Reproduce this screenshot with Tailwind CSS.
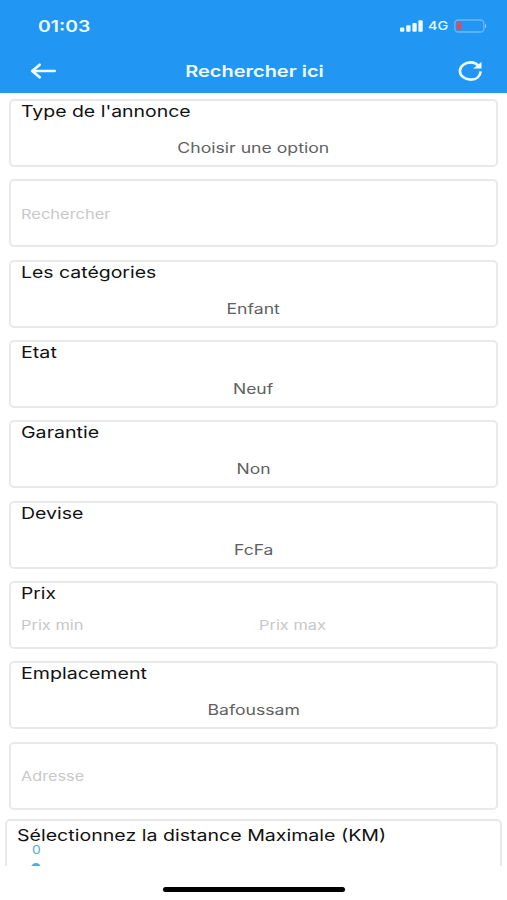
<!DOCTYPE html>
<html lang="fr">
<head>
<meta charset="utf-8">
<title>Rechercher ici</title>
<script src="https://cdn.jsdelivr.net/npm/@tailwindcss/browser@4"></script>
</head>
<body class="bg-white">
<div class="flex h-[900px] w-[507px] flex-col overflow-hidden bg-white font-['Inter','Liberation_Sans',sans-serif] whitespace-nowrap">
  <header class="flex h-[93px] shrink-0 flex-col bg-[#2196f3] text-[#effbff]">
    <div class="flex h-[51px] items-center justify-between pr-[20px] pl-[38px]">
      <span class="origin-left scale-x-[1.21] text-[16px] leading-5 font-semibold">01:03</span>
      <div class="flex items-center">
        <svg class="mr-[5px] h-3 w-[23px]" viewBox="0 0 23 12" fill="currentColor"><rect x="0" y="7.5" width="4.3" height="4.2" rx="1"/><rect x="6.2" y="5.3" width="4.3" height="6.4" rx="1"/><rect x="12.4" y="3" width="4.3" height="8.7" rx="1"/><rect x="18.4" y="0.2" width="4.3" height="11.5" rx="1"/></svg>
        <span class="w-[26px] text-[12px] leading-4 font-medium"><span class="inline-block origin-left scale-x-[1.2]">4G</span></span>
        <svg class="h-[14px] w-[33px]" viewBox="0 0 33 14"><rect x="0.8" y="1" width="29" height="12" rx="3.5" fill="none" stroke="#6db8f7" stroke-width="1.3"/><rect x="2.7" y="2.8" width="4.8" height="8.4" rx="1.5" fill="#c65569"/><path d="M31 4.500q2.500 2.500 0 5z" fill="#8ecbfb"/></svg>
      </div>
    </div>
    <div class="flex h-[40px] items-center justify-between pr-[24px] pl-[30px]">
      <svg class="h-4 w-[27px]" viewBox="0 0 27 16" fill="none" stroke="currentColor" stroke-width="2.7" stroke-linecap="round" stroke-linejoin="round"><path d="M24.700 8H2.500M9.700 1.800L2.200 8l7.500 6.200"/></svg>
      <h1 class="-ml-[7px] scale-x-[1.25] text-[16px] leading-5 font-semibold">Rechercher ici</h1>
      <svg class="h-[20px] w-[25px]" viewBox="0 0 25 20" fill="none" stroke="currentColor" stroke-width="2.6"><path d="M20.500 4.800C18.500 2.500 15.800 1.400 12.700 1.400C6.700 1.400 1.900 5.200 1.900 10S6.700 18.600 12.700 18.600S22.300 15.300 22.600 10.300"/><path d="M23.500 0.800v6.800h-8.300l3.100-2.700 1.500-.8z" fill="currentColor" stroke="none"/></svg>
    </div>
  </header>
  <main class="flex h-[773px] shrink-0 flex-col overflow-hidden pt-[6px]">
    <div class="flex flex-col gap-[12.35px] px-[9px]">
      <section class="flex h-[68px] flex-col rounded-[5px] border-2 border-[#e9e9e9] px-[10px]">
        <h2 class="h-[22px] text-[16px] leading-[21px] text-[#111]"><span class="inline-block origin-left scale-x-[1.215]">Type de l'annonce</span></h2>
        <p class="pt-[15px] text-center text-[14px] leading-[20px] text-[#606060]"><span class="inline-block scale-x-[1.26]">Choisir une option</span></p>
      </section>
      <section class="flex h-[68px] items-center rounded-[5px] border-2 border-[#e9e9e9] px-[10px] pt-[2px]">
        <span class="origin-left scale-x-[1.265] text-[13px] text-[#c8c8c8]">Rechercher</span>
      </section>
      <section class="flex h-[68px] flex-col rounded-[5px] border-2 border-[#e9e9e9] px-[10px]">
        <h2 class="h-[22px] text-[16px] leading-[21px] text-[#111]"><span class="inline-block origin-left scale-x-[1.215]">Les catégories</span></h2>
        <p class="pt-[15px] text-center text-[14px] leading-[20px] text-[#606060]"><span class="inline-block scale-x-[1.26]">Enfant</span></p>
      </section>
      <section class="flex h-[68px] flex-col rounded-[5px] border-2 border-[#e9e9e9] px-[10px]">
        <h2 class="h-[22px] text-[16px] leading-[21px] text-[#111]"><span class="inline-block origin-left scale-x-[1.23]">Etat</span></h2>
        <p class="pt-[15px] text-center text-[14px] leading-[20px] text-[#606060]"><span class="inline-block scale-x-[1.25]">Neuf</span></p>
      </section>
      <section class="flex h-[68px] flex-col rounded-[5px] border-2 border-[#e9e9e9] px-[10px]">
        <h2 class="h-[22px] text-[16px] leading-[21px] text-[#111]"><span class="inline-block origin-left scale-x-[1.225]">Garantie</span></h2>
        <p class="pt-[15px] text-center text-[14px] leading-[20px] text-[#606060]"><span class="inline-block scale-x-[1.25]">Non</span></p>
      </section>
      <section class="flex h-[68px] flex-col rounded-[5px] border-2 border-[#e9e9e9] px-[10px]">
        <h2 class="h-[22px] text-[16px] leading-[21px] text-[#111]"><span class="inline-block origin-left scale-x-[1.22]">Devise</span></h2>
        <p class="pt-[15px] text-center text-[14px] leading-[20px] text-[#606060]"><span class="inline-block scale-x-[1.25]">FcFa</span></p>
      </section>
      <section class="flex h-[68px] flex-col rounded-[5px] border-2 border-[#e9e9e9] px-[10px]">
        <h2 class="h-[22px] text-[16px] leading-[20px] text-[#111]"><span class="inline-block origin-left scale-x-[1.2]">Prix</span></h2>
        <div class="flex pt-[10px] text-[13px] leading-[20px] text-[#c8c8c8]">
          <p class="w-[238px]"><span class="inline-block origin-left scale-x-[1.26]">Prix min</span></p>
          <p><span class="inline-block origin-left scale-x-[1.26]">Prix max</span></p>
        </div>
      </section>
      <section class="flex h-[68px] flex-col rounded-[5px] border-2 border-[#e9e9e9] px-[10px]">
        <h2 class="h-[22px] text-[16px] leading-[20px] text-[#111]"><span class="inline-block origin-left scale-x-[1.225]">Emplacement</span></h2>
        <p class="pt-[15px] text-center text-[14px] leading-[20px] text-[#606060]"><span class="inline-block scale-x-[1.26]">Bafoussam</span></p>
      </section>
      <section class="flex h-[68px] items-center rounded-[5px] border-2 border-[#e9e9e9] px-[10px] pt-[2px]">
        <span class="origin-left scale-x-[1.25] text-[13px] text-[#c8c8c8]">Adresse</span>
      </section>
    </div>
    <section class="mx-[5px] mt-[9.2px] flex h-[90px] shrink-0 flex-col rounded-[5px] border-2 border-[#e9e9e9] px-[10px] pt-[6px]">
      <h2 class="h-[16px] text-[16px] leading-[16px] text-[#111]"><span class="inline-block origin-left scale-x-[1.223]">Sélectionnez la distance Maximale (KM)</span></h2>
      <span class="ml-[15px] h-[13px] w-2 origin-left scale-x-[1.15] pt-px text-[12px] leading-[12px] text-[#58abd8]">0</span>
      <span class="mt-[7px] ml-[14px] h-[10px] w-[10px] rounded-full bg-[#58abd8]"></span>
    </section>
  </main>
  <footer class="flex h-[34px] shrink-0 items-start justify-center bg-white pt-[20.5px]">
    <div class="h-[5.500px] w-[182px] rounded-full bg-black"></div>
  </footer>
</div>
</body>
</html>
